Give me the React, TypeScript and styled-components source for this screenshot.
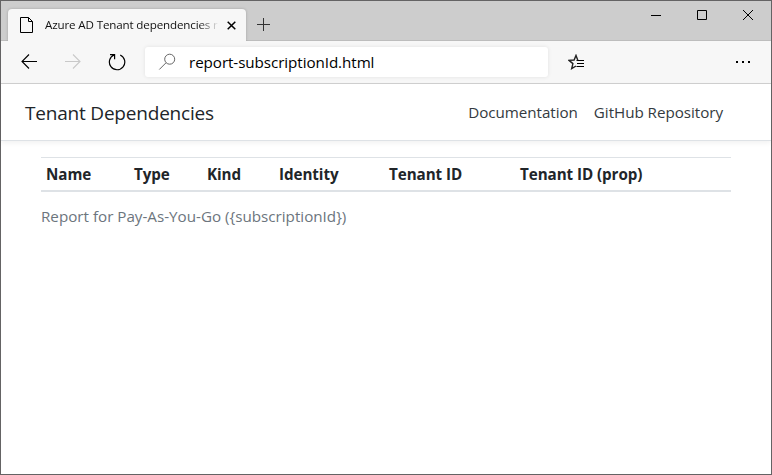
import React from "react";
import styled, { createGlobalStyle } from "styled-components";

const GlobalStyle = createGlobalStyle`
  * { box-sizing: border-box; }
  body { margin: 0; font-family: "Open Sans", "Noto Sans", sans-serif; overflow: hidden; }
`;

const Window = styled.div`
  width: 772px;
  height: 475px;
  display: flex;
  flex-direction: column;
  border: 1px solid #646364;
  background: #fff;
`;

const TitleBar = styled.header`
  height: 40px;
  flex: none;
  display: flex;
  align-items: flex-end;
  padding-left: 7px;
  background: #cdcdcd;
  box-shadow: inset 0 -1px 0 #bdbdbd;
`;

const Tab = styled.div`
  width: 238px;
  height: 32px;
  display: flex;
  align-items: center;
  padding-left: 11px;
  border-radius: 4px 4px 0 0;
  background: #f7f7f7;
  box-shadow: 0 0 3px rgba(0, 0, 0, 0.22);
  clip-path: inset(-4px -4px 0 -4px);
`;

const TabTitle = styled.div`
  width: 174px;
  margin-left: 11px;
  white-space: nowrap;
  font-size: 11.6px;
  line-height: 20px;
  letter-spacing: -0.14px;
  color: #111;
  mask-image: linear-gradient(to right, #000 154px, transparent 174px);
`;

const TabClose = styled.div`
  display: flex;
  margin-left: 8px;
`;

const NewTab = styled.div`
  display: flex;
  margin: 0 0 10px 11px;
`;

const WindowControls = styled.div`
  display: flex;
  align-self: flex-start;
  margin-left: auto;
`;

const ControlButton = styled.div`
  width: 46px;
  height: 28px;
  display: grid;
  place-items: center;
`;

const Toolbar = styled.div`
  height: 43px;
  flex: none;
  display: flex;
  align-items: center;
  padding-left: 20px;
  border-bottom: 1px solid #d0d0d0;
  background: #f7f7f7;
`;

const ToolIcon = styled.div<{ $gap?: number; $lift?: number }>`
  display: flex;
  margin-left: ${(p) => p.$gap ?? 0}px;
  padding-bottom: ${(p) => p.$lift ?? 0}px;
`;

const AddressBar = styled.div`
  width: 403px;
  height: 30px;
  display: flex;
  align-items: center;
  margin-left: 19px;
  padding-left: 13px;
  border-radius: 3px;
  background: #fff;
  box-shadow: 0 0 4px rgba(0, 0, 0, 0.09);
`;

const Address = styled.span`
  margin-left: 13px;
  font-size: 15.2px;
  letter-spacing: -0.07px;
  line-height: 20px;
  color: #000;
`;

const NavBar = styled.nav`
  height: 57px;
  flex: none;
  display: flex;
  align-items: center;
  padding: 0 48px 0 24px;
  border-bottom: 1px solid #dee2e6;
  box-shadow: 0 2px 5px rgba(0, 0, 0, 0.06);
`;

const Brand = styled.h1`
  margin: 0 auto 0 0;
  padding-top: 2px;
  font-size: 19px;
  font-weight: 400;
  line-height: 30px;
  letter-spacing: -0.2px;
  color: #212529;
`;

const NavLink = styled.a`
  margin-left: 16px;
  font-size: 15.2px;
  line-height: 24px;
  letter-spacing: -0.04px;
  color: #343a40;
`;

const Content = styled.main`
  padding: 16px 40px;
`;

const TableHead = styled.div`
  height: 35px;
  display: grid;
  grid-template-columns: 88px 73px 72px 110px 131px 1fr;
  align-items: center;
  border-top: 1px solid #dee2e6;
  border-bottom: 2px solid #dee2e6;
`;

const HeadCell = styled.div`
  padding-left: 5px;
  font-size: 15.2px;
  font-weight: 700;
  line-height: 24px;
  letter-spacing: -0.07px;
  color: #212529;
`;

const Caption = styled.p`
  margin: 12px 0 0;
  font-size: 15.2px;
  line-height: 24px;
  letter-spacing: 0px;
  color: #6c757d;
`;

const columns = ["Name", "Type", "Kind", "Identity", "Tenant ID", "Tenant ID (prop)"];

const App = () => (
  <>
    <GlobalStyle />
    <Window>
      <TitleBar>
        <Tab>
          <svg width="15" height="18" viewBox="0 0 15 18" fill="none" stroke="#000">
            <path d="M1.5 1.5H9.5L13.5 5.5V16.5H1.5ZM9.5 1.5V5.5H13.5" />
          </svg>
          <TabTitle>Azure AD Tenant dependencies r</TabTitle>
          <TabClose>
            <svg width="9" height="9" viewBox="0 0 9 9" stroke="#000" strokeWidth="1.5">
              <path d="M0.7 0.7L8.3 8.3M8.3 0.7L0.7 8.3" />
            </svg>
          </TabClose>
        </Tab>
        <NewTab>
          <svg width="13" height="13" viewBox="0 0 13 13" stroke="#333">
            <path d="M6.5 0V13M0 6.5H13" />
          </svg>
        </NewTab>
        <WindowControls>
          <ControlButton>
            <svg width="10" height="10" viewBox="0 0 10 10" stroke="#000">
              <path d="M0 5.5H10" />
            </svg>
          </ControlButton>
          <ControlButton>
            <svg width="10" height="10" viewBox="0 0 10 10" stroke="#000" fill="none">
              <path d="M0.5 0.5H9.5V9.5H0.5Z" />
            </svg>
          </ControlButton>
          <ControlButton>
            <svg width="10" height="10" viewBox="0 0 10 10" stroke="#000">
              <path d="M0 0L10 10M10 0L0 10" />
            </svg>
          </ControlButton>
        </WindowControls>
      </TitleBar>
      <Toolbar>
        <ToolIcon $lift={2}>
          <svg width="16" height="16" viewBox="0 0 16 16" stroke="#000" strokeWidth="1.1" fill="none">
            <path d="M16 8.5H1M8 1.5L1 8.5L8 15.5" />
          </svg>
        </ToolIcon>
        <ToolIcon $gap={28} $lift={2}>
          <svg width="16" height="16" viewBox="0 0 16 16" stroke="#c9c9c9" strokeWidth="1.1" fill="none">
            <path d="M0 8.5H15M8 1.5L15 8.5L8 15.5" />
          </svg>
        </ToolIcon>
        <ToolIcon $gap={27}>
          <svg width="18" height="18" viewBox="0 0 18 18" stroke="#000" strokeWidth="1.2" fill="none">
            <path d="M12.2 2A7.7 7.7 0 1 1 6.2 1.9M2 1.6H6.6V6.2" />
          </svg>
        </ToolIcon>
        <AddressBar>
          <svg width="18" height="18" viewBox="0 0 18 18" stroke="#666" fill="none">
            <circle cx="11.7" cy="6.2" r="5" />
            <path d="M8 9.8L1.3 16.5" />
          </svg>
          <Address>report-subscriptionId.html</Address>
        </AddressBar>
        <ToolIcon $gap={20}>
          <svg width="16" height="16" viewBox="0 0 16 16" stroke="#000" fill="none">
            <path d="M8.5 6.5H16M9 9.5H16M8.5 12.5H16" />
            <path
              d="M9.8 6.2L8 1.4L6.1 6L1 6.4L4.9 9.6L3.7 14.6L8 12"
              stroke="#222"
              strokeWidth="1.4"
            />
          </svg>
        </ToolIcon>
        <ToolIcon $gap={152}>
          <svg width="14" height="2" viewBox="0 0 14 2" fill="#000">
            <path d="M0 0H2V2H0ZM6 0H8V2H6ZM12 0H14V2H12Z" />
          </svg>
        </ToolIcon>
      </Toolbar>
      <NavBar>
        <Brand>Tenant Dependencies</Brand>
        <NavLink>Documentation</NavLink>
        <NavLink>GitHub Repository</NavLink>
      </NavBar>
      <Content>
        <TableHead>
          {columns.map((label) => (
            <HeadCell key={label}>{label}</HeadCell>
          ))}
        </TableHead>
        <Caption>Report for Pay-As-You-Go ({"{subscriptionId}"})</Caption>
      </Content>
    </Window>
  </>
);

export default App;
